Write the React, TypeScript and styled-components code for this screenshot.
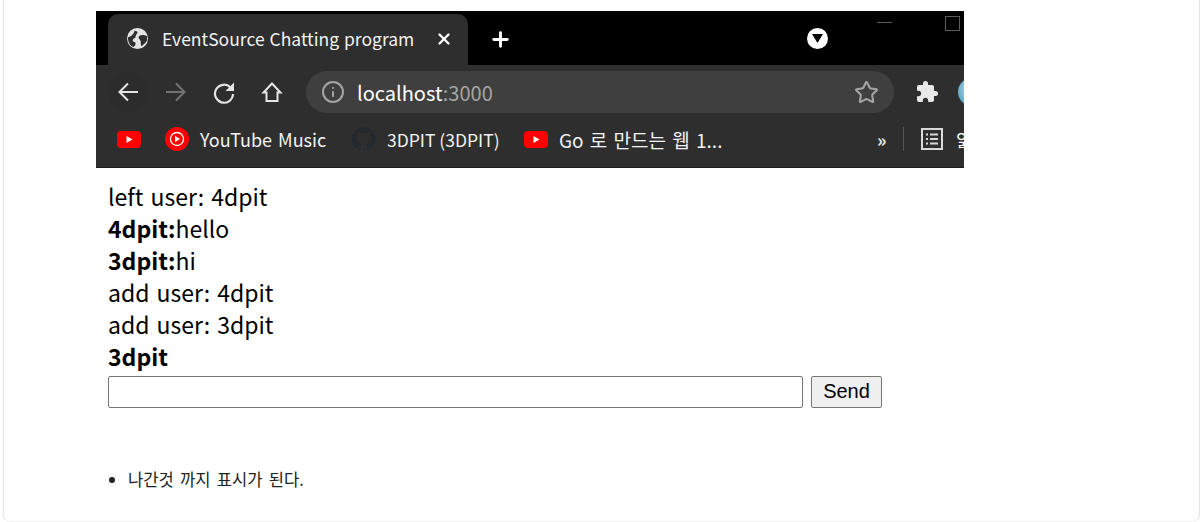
import React from "react";
import styled, { createGlobalStyle } from "styled-components";
import { Info, Star, X, Plus } from "lucide-react";

const Global = createGlobalStyle`
  html, body { margin: 0; padding: 0; background: #fff; }
  body { font-family: "Noto Sans CJK KR", "Noto Sans", sans-serif; overflow: hidden; }
  svg { flex: none; display: block; }
`;

const UI = `"Noto Sans CJK KR", "Noto Sans", sans-serif`;

const Card = styled.main`
  box-sizing: border-box;
  width: 1197px;
  height: 522px;
  margin-left: 3px;
  padding: 11px 0 0 92px;
  border: 1px solid #e4e4e4;
  border-top: none;
  border-bottom-color: #f3f3f3;
  border-radius: 0 0 7px 7px;
  overflow: hidden;
`;
const Shot = styled.div`
  width: 868px;
  height: 157px;
  background: #2e2e2e;
  overflow: hidden;
  display: flex;
  flex-direction: column;
  color: #fff;
  font-family: ${UI};
  border-bottom: 1px solid #1c1c1c;
  box-sizing: border-box;
`;
const TabStrip = styled.div`
  height: 54px;
  flex: none;
  background: #000;
  display: flex;
  align-items: flex-end;
  padding-left: 12px;
  position: relative;
`;
const Tab = styled.div`
  box-sizing: border-box;
  width: 360px;
  height: 51px;
  flex: none;
  background: #2e2e2e;
  border-radius: 10px 10px 0 0;
  display: flex;
  align-items: center;
  padding: 0 15px 2px 19px;
  gap: 14px;
`;
const TabTitle = styled.span`
  flex: 1;
  font-size: 17.5px;
  word-spacing: 1px;
  white-space: nowrap;
  color: #f2f2f2;
`;
const NewTab = styled.div`
  display: flex;
  align-items: center;
  margin: 0 0 14px 21px;
`;
const Spacer = styled.div`
  flex: 1;
`;
const TabSearch = styled.div`
  width: 21px;
  height: 21px;
  margin: 0 136px 16px 0;
  border-radius: 50%;
  background: #fff;
  display: flex;
  align-items: center;
  justify-content: center;
`;
const Minimize = styled.div`
  position: absolute;
  left: 781px;
  top: 11px;
  width: 15px;
  height: 1px;
  background: #5a5a5a;
`;
const Maximize = styled.div`
  position: absolute;
  left: 849px;
  top: 5px;
  width: 15px;
  height: 15px;
  box-sizing: border-box;
  border: 1px solid #5a5a5a;
`;
const Toolbar = styled.div`
  height: 54px;
  flex: none;
  display: flex;
  align-items: center;
  padding: 0 0 0 20px;
`;
const NavIcon = styled.div<{ $gap?: number; $halo?: boolean }>`
  width: 24px;
  height: 24px;
  flex: none;
  margin-right: ${(p) => p.$gap ?? 24}px;
  display: flex;
  align-items: center;
  justify-content: center;
  border-radius: 50%;
  box-shadow: ${(p) => (p.$halo ? "0 0 0 8px #2c2c2c" : "none")};
  background: ${(p) => (p.$halo ? "#2c2c2c" : "transparent")};
`;
const Omnibox = styled.div`
  box-sizing: border-box;
  width: 588px;
  height: 42px;
  flex: none;
  margin-left: -5px;
  border-radius: 21px;
  background: #3f3f3f;
  display: flex;
  align-items: center;
  padding: 0 15px 0 15px;
  gap: 12px;
`;
const Url = styled.span`
  flex: 1;
  font-size: 20px;
  color: #fff;
  white-space: nowrap;
`;
const Port = styled.span`
  color: #a5a5a5;
`;
const Extensions = styled.div`
  display: flex;
  align-items: center;
  margin-left: 21px;
  gap: 19px;
  flex: none;
`;
const Bookmarks = styled.div`
  flex: 1;
  display: flex;
  align-items: center;
  padding: 0 0 8px 21px;
  white-space: nowrap;
`;
const Mark = styled.div<{ $w: number; $ws?: number; $size?: number }>`
  width: ${(p) => p.$w}px;
  flex: none;
  display: flex;
  align-items: center;
  gap: 11px;
  font-size: ${(p) => p.$size ?? 17.5}px;
  word-spacing: ${(p) => p.$ws ?? 0}px;
  color: #f2f2f2;
`;
const Chevrons = styled.span`
  font-size: 18px;
  font-weight: 700;
  color: #e8e8e8;
  width: 26px;
  flex: none;
`;
const Divider = styled.div`
  width: 1px;
  height: 24px;
  background: #555;
  flex: none;
  margin-right: 17px;
`;
const Reading = styled.span`
  font-size: 17.5px;
  margin-left: 13px;
  flex: none;
`;

const Chat = styled.section`
  padding: 12px 0 0 12px;
  width: 780px;
`;
const Line = styled.div`
  font-size: 23px;
  line-height: 32px;
  height: 32px;
  word-spacing: 2px;
  color: #000;
  white-space: nowrap;
`;
const Form = styled.form`
  display: flex;
  gap: 8px;
  margin-top: 4px;
`;
const Field = styled.input`
  box-sizing: border-box;
  width: 695px;
  height: 32px;
  border: 1px solid #767676;
  border-radius: 2px;
  background: #fff;
  padding: 0;
`;
const Send = styled.button`
  box-sizing: border-box;
  width: 71px;
  height: 32px;
  border: 1px solid #767676;
  border-radius: 2px;
  background: #efefef;
  font-family: "Liberation Sans", sans-serif;
  font-size: 20px;
  color: #000;
  padding: 0 0 2px;
`;
const Notes = styled.ul`
  margin: 59px 0 0;
  padding: 0 0 0 20px;
  font-size: 16.6px;
  line-height: 24px;
  word-spacing: 2.5px;
  color: #222;
`;

const Globe = () => (
  <svg width="21" height="21" viewBox="0 0 22 22">
    <circle cx="11" cy="11" r="11" fill="#e3e3e3" />
    <path d="M1 10c3-1 6-3 7-7 2 0 3 1 3 2s-2 2-2 4-3 2-3 4 3 1 3 3-1 3-2 4C3 19 1 15 1 10zM13 8c2-1 6-1 8 1v4c-2 3-4 5-6 6-1-2 0-4-1-6s-3-3-1-5z" fill="#2e2e2e" />
  </svg>
);
const BackArrow = () => (
  <svg width="24" height="24" viewBox="0 0 24 24" fill="none" stroke="#e4e4e4" strokeWidth="2">
    <path d="M22 12H4M12 3.500 3.500 12l8.500 8.500" />
  </svg>
);
const ForwardArrow = () => (
  <svg width="24" height="24" viewBox="0 0 24 24" fill="none" stroke="#737373" strokeWidth="2">
    <path d="M2 12h18M12 3.500 20.500 12 12 20.500" />
  </svg>
);
const Reload = () => (
  <svg width="24" height="24" viewBox="0 0 24 24" fill="none">
    <path d="M18.500 7.500A9 9 0 1 0 21 14" stroke="#e4e4e4" strokeWidth="2.200" />
    <path d="M22 2.500v8.500h-8.500z" fill="#e4e4e4" />
  </svg>
);
const HomeIcon = () => (
  <svg width="24" height="24" viewBox="0 0 24 24" fill="none" stroke="#e4e4e4" strokeWidth="2">
    <path d="M12 3.500 3.500 12.500H6.500V21h11v-8.500h3z" />
  </svg>
);
const YouTube = () => (
  <svg width="24" height="17" viewBox="0 0 24 17">
    <rect width="24" height="17" rx="4" fill="#f00" />
    <path d="M9.500 5l6 3.500-6 3.500z" fill="#fff" />
  </svg>
);
const YTMusic = () => (
  <svg width="24" height="24" viewBox="0 0 24 24">
    <circle cx="12" cy="12" r="12" fill="#f00" />
    <circle cx="12" cy="12" r="6.500" fill="none" stroke="#fff" strokeWidth="1.300" />
    <path d="M10 8.700l5 3.300-5 3.300z" fill="#fff" />
  </svg>
);
const GitHubMark = () => (
  <svg width="24" height="24" viewBox="0 0 24 24">
    <path fill="#24292e" d="M12 0a12 12 0 0 0-3.800 23.400c.6.1.8-.3.8-.6v-2.100c-3.300.7-4-1.600-4-1.600-.6-1.400-1.400-1.800-1.400-1.800-1.100-.7.1-.7.1-.7 1.200.1 1.800 1.200 1.800 1.200 1.100 1.800 2.800 1.300 3.500 1 .1-.8.4-1.300.8-1.600-2.700-.3-5.500-1.300-5.500-5.900 0-1.300.5-2.400 1.200-3.200-.1-.3-.5-1.500.1-3.200 0 0 1-.3 3.300 1.200a11.500 11.500 0 0 1 6 0c2.300-1.500 3.300-1.200 3.300-1.200.6 1.700.2 2.900.1 3.200.8.8 1.200 1.900 1.200 3.200 0 4.600-2.800 5.600-5.500 5.900.4.400.8 1.100.8 2.200v3.300c0 .3.2.7.8.6A12 12 0 0 0 12 0z" />
  </svg>
);
const Puzzle = () => (
  <svg width="24" height="24" viewBox="0 0 24 24">
    <path fill="#e8e8e8" d="M20.500 11H19V7c0-1.100-.9-2-2-2h-4V3.500a2.500 2.500 0 0 0-5 0V5H4c-1.100 0-2 .9-2 2v3.800h1.500c1.500 0 2.700 1.200 2.700 2.700S5 16.200 3.500 16.200H2V20c0 1.100.9 2 2 2h3.800v-1.500c0-1.500 1.200-2.700 2.700-2.700s2.700 1.200 2.700 2.700V22H17c1.100 0 2-.9 2-2v-4h1.500a2.500 2.500 0 0 0 0-5z" />
  </svg>
);
const Avatar = () => (
  <svg width="28" height="28" viewBox="0 0 26 26">
    <defs>
      <radialGradient id="earth" cx="0.6" cy="0.4" r="0.7">
        <stop offset="0" stopColor="#e8f4f8" />
        <stop offset="1" stopColor="#4f9fc0" />
      </radialGradient>
    </defs>
    <circle cx="13" cy="13" r="13" fill="url(#earth)" />
  </svg>
);
const ReadingList = () => (
  <svg width="22" height="22" viewBox="0 0 22 22" fill="none" stroke="#d8d8d8" strokeWidth="2">
    <rect x="1" y="1" width="20" height="20" />
    <path d="M5 6.500h2M9 6.500h8M5 11h2M9 11h8M5 15.500h2M9 15.500h8" />
  </svg>
);

export default function App() {
  return (
    <>
      <Global />
      <Card>
        <Shot>
          <TabStrip>
            <Tab>
              <Globe />
              <TabTitle>EventSource Chatting program</TabTitle>
              <X size={18} strokeWidth={3} color="#fff" />
            </Tab>
            <NewTab>
              <Plus size={23} strokeWidth={3} color="#fff" />
            </NewTab>
            <Spacer />
            <TabSearch>
              <svg width="11" height="9" viewBox="0 0 11 9"><path d="M0 0h11L5.500 9z" fill="#000" /></svg>
            </TabSearch>
            <Minimize />
            <Maximize />
          </TabStrip>
          <Toolbar>
            <NavIcon $gap={24} $halo><BackArrow /></NavIcon>
            <NavIcon $gap={24}><ForwardArrow /></NavIcon>
            <NavIcon $gap={24}><Reload /></NavIcon>
            <NavIcon $gap={27}><HomeIcon /></NavIcon>
            <Omnibox>
              <Info size={24} color="#a5a5a5" strokeWidth={2} />
              <Url>localhost<Port>:3000</Port></Url>
              <Star size={25} color="#a5a5a5" strokeWidth={2} />
            </Omnibox>
            <Extensions>
              <Puzzle />
              <Avatar />
            </Extensions>
          </Toolbar>
          <Bookmarks>
            <Mark $w={48}><YouTube /></Mark>
            <Mark $w={187} $size={18} $ws={2}><YTMusic />YouTube Music</Mark>
            <Mark $w={172}><GitHubMark />3DPIT (3DPIT)</Mark>
            <Mark $w={353} $size={19} $ws={2}><YouTube />Go 로 만드는 웹 1...</Mark>
            <Chevrons>»</Chevrons>
            <Divider />
            <ReadingList />
            <Reading>읽기 목록</Reading>
          </Bookmarks>
        </Shot>
        <Chat>
          <Line>left user: 4dpit</Line>
          <Line><b>4dpit:</b>hello</Line>
          <Line><b>3dpit:</b>hi</Line>
          <Line>add user: 4dpit</Line>
          <Line>add user: 3dpit</Line>
          <Line><b>3dpit</b></Line>
          <Form onSubmit={(e) => e.preventDefault()}>
            <Field />
            <Send>Send</Send>
          </Form>
          <Notes>
            <li>나간것 까지 표시가 된다.</li>
          </Notes>
        </Chat>
      </Card>
    </>
  );
}
